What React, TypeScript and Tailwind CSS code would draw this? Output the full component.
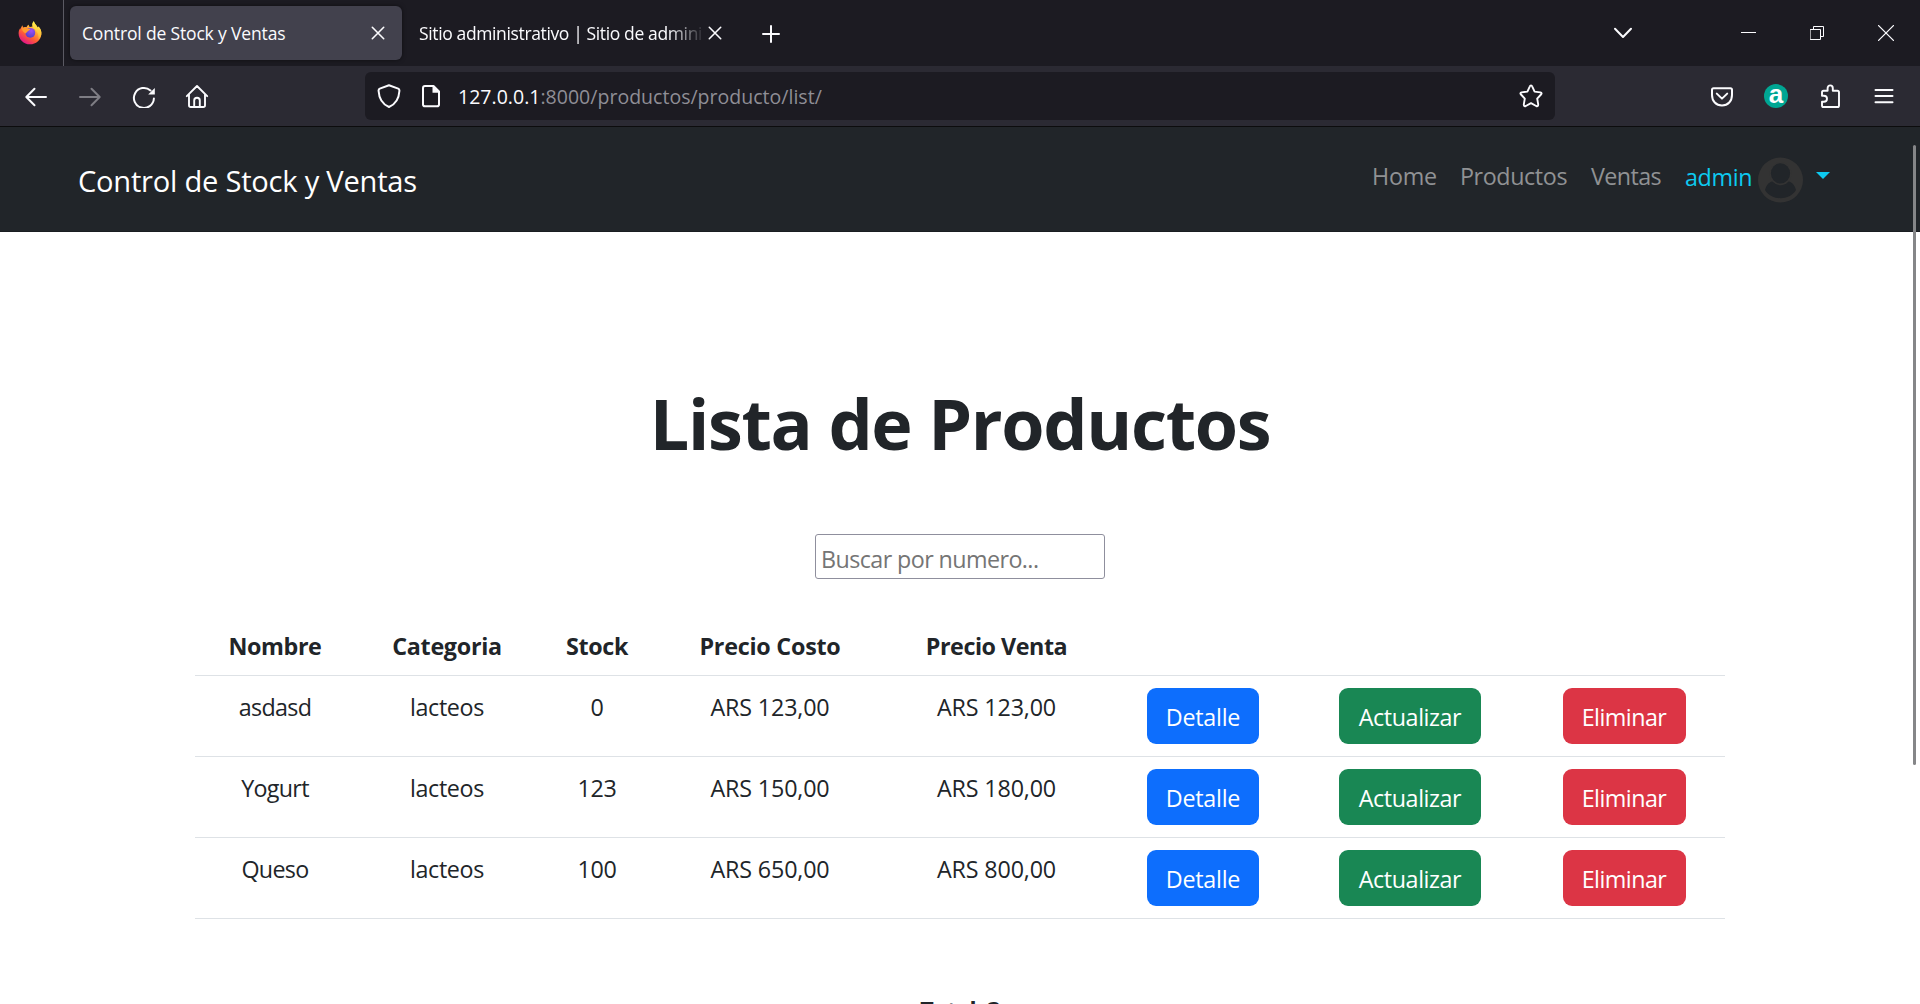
import React from "react";

type IconProps = {
  w?: number;
  h?: number;
  stroke?: number;
  className?: string;
  children: React.ReactNode;
};

function Icon({ w = 24, h = 24, stroke = 2, className = "", children }: IconProps) {
  return (
    <svg
      width={w}
      height={h}
      viewBox={`0 0 ${w} ${h}`}
      fill="none"
      stroke="currentColor"
      strokeWidth={stroke}
      strokeLinecap="round"
      strokeLinejoin="round"
      className={`shrink-0 ${className}`}
    >
      {children}
    </svg>
  );
}

function FirefoxLogo() {
  return (
    <svg width="24" height="24" viewBox="0 0 24 24" className="shrink-0">
      <defs>
        <linearGradient id="flame" x1="0.8" y1="0.1" x2="0.25" y2="0.95">
          <stop offset="0" stopColor="#fff44f" />
          <stop offset="0.35" stopColor="#ffa436" />
          <stop offset="0.65" stopColor="#ff5b36" />
          <stop offset="1" stopColor="#e31587" />
        </linearGradient>
        <radialGradient id="globe" cx="0.6" cy="0.3" r="0.8">
          <stop offset="0" stopColor="#a14ef5" />
          <stop offset="1" stopColor="#4a3fc4" />
        </radialGradient>
        <linearGradient id="tail" x1="0.5" y1="0" x2="0.4" y2="1">
          <stop offset="0" stopColor="#fff44f" />
          <stop offset="1" stopColor="#ffa82f" />
        </linearGradient>
      </defs>
      <path
        d="M4.2 4.2 L5.3 6.6 C6.6 6 8 6 8.6 6.2 C9 5 10 4.1 11 3.8 C10.6 4.8 10.9 5.6 12 6 L14.5 5.4 C13.8 3.2 14.6 1.2 15.9 0.3 C16.2 3 18.8 4.2 19.8 6.8 L20.4 5.6 C22.8 8 23.7 10.6 23.4 13.2 C22.8 19 18 23.3 12 23.3 C5.6 23.3 0.6 18.4 0.6 12.2 C0.6 10.2 1.2 8.6 2 7.4 L2.1 8.6 C2.6 7 3.6 6 4.2 4.2 Z"
        fill="url(#flame)"
      />
      <path
        d="M15.9 0.3 C16.2 3 18.8 4.2 19.8 6.8 L20.4 5.6 C22.8 8 23.7 10.6 23.2 13.8 C22.6 16 21.6 17.4 20.6 18.4 C21 14 19.6 11 16.2 7.6 C14 5.2 14.2 2 15.9 0.3 Z"
        fill="url(#tail)"
      />
      <circle cx="12.3" cy="11.8" r="4.9" fill="url(#globe)" />
      <path d="M3.6 7.6 C5.4 6.4 7.4 6.6 8.8 7.6 L12.2 8.1 C12.2 9.4 10.6 9.8 9.8 10 C9.6 11 8.4 11.4 7.6 12.4 C5.8 11.6 4.2 9.8 3.6 7.6 Z" fill="#ff9a2e" />
    </svg>
  );
}

function TabStrip() {
  return (
    <div className="flex h-[66px] shrink-0 items-center bg-[#1c1b22] text-[#fbfbfe]">
      <div className="flex h-full w-16 items-center border-r border-[#5b5a63] pl-[18px]">
        <FirefoxLogo />
      </div>
      <div className="ml-1.5 flex h-[54px] w-[332px] items-center justify-between rounded-md bg-[#42414d] pr-[17px] pl-3 shadow-[0_0_4px_rgba(0,0,0,0.5)]">
        <span className="text-[17.5px] tracking-[-0.009em] whitespace-nowrap">Control de Stock y Ventas</span>
        <Icon w={14} h={14} stroke={1.6}>
          <path d="M1.3 1.3 12.7 12.7M12.7 1.3 1.3 12.7" />
        </Icon>
      </div>
      <div className="ml-[17px] w-[286px] overflow-hidden text-[17.5px] tracking-[-0.021em] whitespace-nowrap [mask-image:linear-gradient(to_right,black_87%,transparent)]">
        Sitio administrativo | Sitio de admini
      </div>
      <Icon w={14} h={14} stroke={1.6} className="ml-[3px]">
        <path d="M1.3 1.3 12.7 12.7M12.7 1.3 1.3 12.7" />
      </Icon>
      <Icon w={18} h={18} className="mt-px ml-10">
        <path d="M9 1V17M1 9H17" />
      </Icon>
      <Icon w={20} h={12} className="ml-auto">
        <path d="M2 1.8 10 10 18 1.8" />
      </Icon>
      <Icon w={15} h={16} stroke={1} className="ml-[108px]">
        <path d="M0 7.5H15" strokeLinecap="butt" />
      </Icon>
      <Icon w={14} h={14} stroke={1} className="ml-[54px]">
        <path d="M.5 3.5h10v10h-10zM3.5 3.5v-3h10v10h-3" strokeLinejoin="miter" />
      </Icon>
      <Icon w={16} h={16} stroke={1.3} className="mr-[26px] ml-[54px]">
        <path d="M.6.6 15.4 15.4M15.4.6.6 15.4" />
      </Icon>
    </div>
  );
}

function Toolbar() {
  return (
    <div className="flex h-[61px] shrink-0 items-center border-b border-[#0c0c0d] bg-[#2b2a33] text-[#fbfbfe]">
      <Icon className="ml-6">
        <path d="M22 13H2.5M10.5 4.8 2.3 13 10.5 21.2" />
      </Icon>
      <Icon className="ml-[30px] text-[#7e7d84]">
        <path d="M2 13H21.5M13.5 4.8 21.7 13 13.5 21.2" />
      </Icon>
      <Icon className="ml-[30px]">
        <path d="M21.9 14.5A10 10 0 1 1 18.5 6.4" />
        <path d="M22.8 4V10.6H16.2Z" fill="currentColor" stroke="none" />
      </Icon>
      <Icon className="ml-[29px]">
        <path d="M1.8 12.2 12 2 22.2 12.2M4 10.5V21.2Q4 23 5.8 23H18.2Q20 23 20 21.2V10.5M9.2 22.5V16.5A2.8 2.8 0 0 1 14.8 16.5V22.5" strokeWidth={1.9} />
      </Icon>

      <div className="ml-[156px] flex h-12 w-[1190px] items-center rounded-md bg-[#1c1b22]">
        <Icon className="ml-3">
          <path d="M12 1.2 21.2 4.6Q22.6 5.2 22.4 7C22 14 19 20 12 23C5 20 2 14 1.6 7Q1.4 5.2 2.8 4.6Z" />
        </Icon>
        <Icon className="ml-[18px]">
          <path d="M14.5 2H6Q4 2 4 4V20.4Q4 22.2 6 22.2H18Q20 22.2 20 20.4V7.5Z" />
          <path d="M13.5 1.5 20.8 8.8H13.5Z" fill="currentColor" stroke="none" />
        </Icon>
        <span className="mt-0.5 ml-[15px] text-[19.5px] tracking-[0.001em] whitespace-nowrap text-[#8f8e96]">
          <span className="text-[#fbfbfe]">127.0.0.1</span>:8000/productos/producto/list/
        </span>
        <Icon className="mr-3 ml-auto">
          <path d="M12 1.4Q12.8 1.4 13.3 2.6L15.6 7.6 21.4 8.4Q23.4 9 22 10.5L18.2 14.6 19.2 20.4Q19.3 22.8 17.2 22L12 19.2 6.8 22Q4.7 22.8 4.8 20.4L5.8 14.6 2 10.5Q.6 9 2.6 8.4L8.4 7.6 10.7 2.6Q11.2 1.4 12 1.4Z" strokeWidth={1.9} />
        </Icon>
      </div>

      <Icon className="ml-auto">
        <path d="M3.6 4.2H20.4Q22 4.2 22 5.8V11C22 17 18 21.4 12 21.4C6 21.4 2 17 2 11V5.8Q2 4.2 3.6 4.2Z" />
        <path d="M6.8 9.6 12 14.6 17.2 9.6" />
      </Icon>
      <span className="ml-[30px] flex size-6 items-start justify-center rounded-full bg-[#00a693] font-['Liberation_Sans',sans-serif] text-[26px] leading-[20px] font-bold text-white">
        a
      </span>
      <Icon className="ml-[30px]">
        <path d="M4 8.4Q4 6.8 5.6 6.8H9.6V4.2A2.6 2.8 0 0 1 14.8 4.2V6.8H19.4Q21 6.8 21 8.4V21.4Q21 23 19.4 23H5.6Q4 23 4 21.4V17.8H5.8A3.2 3 0 0 0 5.8 11.8H4Z" strokeWidth={1.9} />
      </Icon>
      <Icon className="mr-6 ml-[30px]">
        <path d="M3.5 6H20.5M3.5 12H20.5M3.5 18.3H20.5" />
      </Icon>
    </div>
  );
}

function Navbar() {
  return (
    <header className="flex h-[105px] shrink-0 items-start border-b border-[#1a1d21] bg-[#212529] pr-[90px] pl-[78px]">
      <span className="mt-9 text-[29.1px] leading-9 tracking-[-0.008em] text-white">Control de Stock y Ventas</span>
      <nav className="mt-[31px] ml-auto flex items-start text-[23.3px] leading-9 text-[#909294]">
        <span className="w-[88px] tracking-[-0.01em]">Home</span>
        <span className="w-[131px] tracking-[-0.017em]">Productos</span>
        <span className="w-[94px] tracking-[-0.025em]">Ventas</span>
        <span className="mt-px w-[73px] tracking-[-0.015em] text-[#0dcaf0]">admin</span>
        <svg width="46" height="46" viewBox="0 0 46 46" className="-mt-[1.5px]">
          <circle cx="22.5" cy="23" r="22.5" fill="#333" />
          <path d="M7 33C8.5 27 12 24.6 14.9 24.2C19.5 28.8 25.5 28.8 30.1 24.2C33 24.6 36.5 27 38 33C31.5 44 13.5 44 7 33Z" fill="#212529" />
          <ellipse cx="22.5" cy="16.6" rx="11" ry="11.6" fill="#333" />
          <ellipse cx="22.5" cy="16.4" rx="9.6" ry="10.2" fill="#212529" />
        </svg>
        <svg width="14" height="7" viewBox="0 0 14 7" className="mt-[14px] ml-[12px]">
          <path d="M0 0H14L7 7Z" fill="#0dcaf0" />
        </svg>
      </nav>
    </header>
  );
}

const products = [
  { name: "asdasd", category: "lacteos", stock: "0", cost: "ARS 123,00", sale: "ARS 123,00" },
  { name: "Yogurt", category: "lacteos", stock: "123", cost: "ARS 150,00", sale: "ARS 180,00" },
  { name: "Queso", category: "lacteos", stock: "100", cost: "ARS 650,00", sale: "ARS 800,00" },
];

const columns = "grid grid-cols-[160px_184px_116px_230px_223px_190px_224px_203px] text-center";

function ProductTable() {
  return (
    <section className="w-[1530px] text-[23.3px] leading-9 tracking-[-0.015em] text-[#212529]">
      <div className={`${columns} h-[57px] border-b border-[#dee2e6] pt-[9px] font-bold`}>
        <span className="tracking-[-0.018em]">Nombre</span>
        <span className="tracking-[-0.012em]">Categoria</span>
        <span>Stock</span>
        <span className="tracking-[-0.01em]">Precio Costo</span>
        <span className="tracking-[-0.02em]">Precio Venta</span>
      </div>
      {products.map((p) => (
        <div key={p.name} className={`${columns} h-[81px] border-b border-[#dee2e6] pt-3`}>
          <span className="mt-px tracking-[-0.03em]">{p.name}</span>
          <span className="mt-px">{p.category}</span>
          <span className="mt-px">{p.stock}</span>
          <span className="mt-px tracking-[-0.007em]">{p.cost}</span>
          <span className="mt-px tracking-[-0.007em]">{p.sale}</span>
          <button className="h-14 w-28 justify-self-center rounded-[9px] bg-[#0d6efd] pt-px tracking-[-0.01em] text-white">Detalle</button>
          <button className="h-14 w-[142px] justify-self-center rounded-[9px] bg-[#198754] pt-px tracking-[-0.018em] text-white">Actualizar</button>
          <button className="ml-px h-14 w-[123px] justify-self-center rounded-[9px] bg-[#dc3545] pt-px tracking-[-0.023em] text-white">Eliminar</button>
        </div>
      ))}
    </section>
  );
}

export default function App() {
  return (
    <div className="relative flex h-[1004px] w-[1920px] flex-col overflow-hidden bg-white font-['Open_Sans',sans-serif]">
      <TabStrip />
      <Toolbar />
      <Navbar />
      <main className="flex flex-col items-center">
        <h1 className="mt-[148px] text-[70px] leading-[86px] font-bold tracking-[-0.019em] text-[#212529]">Lista de Productos</h1>
        <input
          placeholder="Buscar por numero..."
          className="mt-[68px] h-[45px] w-[290px] rounded-[3px] border border-[#8f8f9d] px-[5px] pt-[4px] text-[23.3px] tracking-[-0.025em] placeholder:text-[#757575]"
        />
        <div className="mt-10">
          <ProductTable />
        </div>
        <p className="mt-[73px] text-[23.3px] leading-9 font-bold tracking-[-0.03em] whitespace-nowrap text-[#212529]">Total: 3</p>
      </main>
      <div className="absolute top-[145px] left-[1913px] h-[620px] w-[3px] rounded-full bg-[#858688]" />
    </div>
  );
}
